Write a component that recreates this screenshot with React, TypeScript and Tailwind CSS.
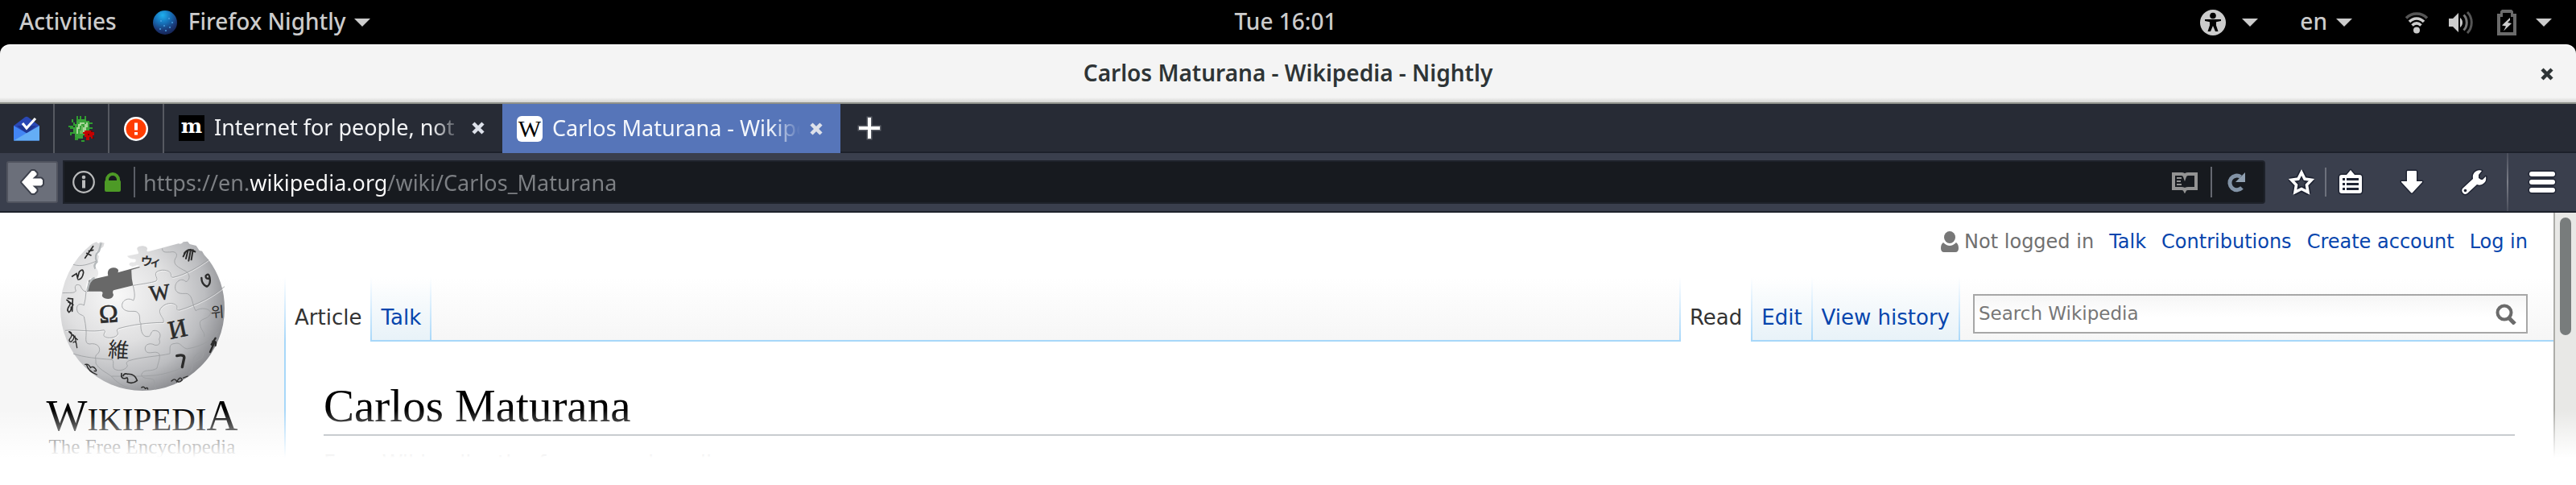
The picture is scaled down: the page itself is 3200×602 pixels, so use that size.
import React from "react";

const personalLinks = ["Talk", "Contributions", "Create account", "Log in"];

function Caret() {
  return (
    <svg width="20" height="10" viewBox="0 0 20 10" className="text-[#cccccc]">
      <path d="M0 0h20L10 10z" fill="currentColor" />
    </svg>
  );
}

function TopBar() {
  return (
    <header className="flex h-[55px] items-center bg-black px-6 text-[28px] font-medium text-[#cccccc]">
      <div className="flex flex-1 items-center">
        <button className="mr-[45px] pb-1">Activities</button>
        <button className="flex items-center">
          <svg width="30" height="30" viewBox="0 0 30 30" className="mr-[14px]">
            <defs>
              <radialGradient id="nightly" cx="0.4" cy="0.2" r="0.85">
                <stop offset="0" stopColor="#1fb0ee" />
                <stop offset="0.4" stopColor="#1670b8" />
                <stop offset="0.75" stopColor="#1b3672" />
                <stop offset="1" stopColor="#14214f" />
              </radialGradient>
            </defs>
            <circle cx="15" cy="15" r="15" fill="url(#nightly)" />
            <g fill="#4a9fe0">
              <circle cx="10" cy="13" r="1" />
              <circle cx="20" cy="10" r="1" />
              <circle cx="24" cy="15" r="1" />
              <circle cx="14" cy="19" r="1" />
              <circle cx="21" cy="21" r="1" />
              <circle cx="9" cy="23" r="1" />
              <circle cx="16" cy="25" r="1" />
            </g>
          </svg>
          <span className="mr-[10px] pb-1">Firefox Nightly</span>
          <Caret />
        </button>
      </div>
      <div className="pb-1">Tue 16:01</div>
      <div className="flex flex-1 items-center justify-end pr-[6px]">
        <button aria-label="Accessibility" className="mr-[52px] flex items-center gap-5">
          <svg width="32" height="32" viewBox="0 0 32 32">
            <circle cx="16" cy="16" r="16" fill="#cccccc" />
            <circle cx="16" cy="7.500" r="3.800" fill="#000" />
            <path d="M6 12h20v2l-6 1.200v4.300L22.500 27H19l-3-7-3 7H9.500l2.500-7.500v-4.300L6 14z" fill="#000" />
          </svg>
          <Caret />
        </button>
        <button className="mr-[66px] flex items-center gap-[11px]">
          <span className="pb-1">en</span>
          <Caret />
        </button>
        <button aria-label="System menu" className="flex items-center">
          <svg width="28" height="28" viewBox="0 0 28 28" fill="none" className="mr-[26px]">
            <path d="M1 8.500C8 1 20 1 27 8.500" stroke="#555" strokeWidth="3.500" />
            <path d="M5 13C10 7.500 18 7.500 23 13" stroke="#ccc" strokeWidth="3.500" />
            <path d="M8.500 17.500C12 14 16 14 19.500 17.500" stroke="#ccc" strokeWidth="3.500" />
            <circle cx="14" cy="23.500" r="4" fill="#ccc" />
          </svg>
          <svg width="30" height="28" viewBox="0 0 30 28" fill="none" className="mr-[30px]">
            <path d="M0 9h5l7-7v24l-7-7H0z" fill="#ccc" />
            <path d="M14 8c4 3 4 9 0 12z" fill="#ccc" />
            <path d="M18.500 4.500c5 5 5 14 0 19" stroke="#777" strokeWidth="3" />
            <path d="M23 1c7 7 7 19 0 26" stroke="#555" strokeWidth="3" />
          </svg>
          <svg width="24" height="32" viewBox="0 0 24 32" className="mr-6">
            <path d="M0 5h4V2l2-2h12l2 2v3h4v27H0zM4 9v19h16V9h-3V4H7v5z" fill="#6b6b6b" fillRule="evenodd" />
            <path d="M16 10L6 19.500l5 1L8 26.500 18 17l-5-1 3-3z" fill="#ccc" />
          </svg>
          <Caret />
        </button>
      </div>
    </header>
  );
}

function CloseIcon() {
  return (
    <svg width="16" height="16" viewBox="0 0 16 16">
      <path d="M2 2l12 12M14 2L2 14" stroke="currentColor" strokeWidth="4.500" />
    </svg>
  );
}

function TitleBar() {
  return (
    <div className="bg-black">
      <div className="flex h-[74px] items-center rounded-t-[12px] border-t-2 border-b-2 border-t-white border-b-[#8f918a] bg-[linear-gradient(#f4f4f4_64px,#d4d4d2)] px-7 text-[28px] font-semibold text-[#2e3436]">
        <div className="flex-1" />
        <h1 className="pb-1">Carlos Maturana - Wikipedia - Nightly</h1>
        <div className="flex flex-1 justify-end">
          <button aria-label="Close window">
            <CloseIcon />
          </button>
        </div>
      </div>
    </div>
  );
}

function PinnedTab({ label, children }: { label: string; children: React.ReactNode }) {
  return (
    <button
      aria-label={label}
      className="flex w-[68px] items-center justify-center border-r-2 border-[#565961]"
    >
      {children}
    </button>
  );
}

function Tab({ title, active, icon }: { title: string; active?: boolean; icon: React.ReactNode }) {
  return (
    <div
      className={
        active
          ? "flex w-[420px] items-center gap-3 bg-[#5675b9] pr-[22px] pl-[18px] text-[#f4f7fc]"
          : "flex w-[420px] items-center gap-3 border-b-2 border-[#1d212b] pr-[22px] pl-[18px] text-[#f2f3f5]"
      }
    >
      {icon}
      <span className="flex-1 overflow-hidden whitespace-nowrap [mask-image:linear-gradient(to_right,black_88%,transparent)]">
        {title}
      </span>
      <button aria-label={"Close " + title} className="text-[#dde1ea]">
        <CloseIcon />
      </button>
    </div>
  );
}

function TabStrip() {
  return (
    <div className="flex h-[61px] bg-[#272b35] text-[27px]">
      <PinnedTab label="Inbox">
        <svg width="32" height="32" viewBox="0 0 32 32">
          <path d="M0 12L14 1.500q2-1.500 4 0L32 12v10H0z" fill="#2a48b5" />
          <path d="M4 12h24L16 22z" fill="#1f3793" />
          <path d="M0 12l32 18.500H0z" fill="#4285f4" />
          <path d="M32 12v18.500H0z" fill="#64adf5" />
          <path d="M11 9l5 6 11-12" stroke="#fff" strokeWidth="3.200" fill="none" />
        </svg>
      </PinnedTab>
      <PinnedTab label="Bug tracker">
        <svg width="32" height="32" viewBox="0 0 16 16" shapeRendering="crispEdges">
          <path d="M5 0h1v3H5zM7 0h1v3H7zM10 0h1v3h-1zM2 2h1v2h1v2H3V4H2zM0 6h3v1h1v1H1V7H0zM12 4h3v1h-3zM13 7h2v1h-2zM1 10h3v1H2v1H1zM4 13h2v2H4zM8 15h2v1H8z" fill="#2f9e2f" />
          <path d="M6 2h5v1h2v6h-1v3H9v2H5v-1H4v-2H3V7h1V5h1V3h1z" fill="#3aa33a" />
          <path d="M7 4h3v1H8v1H7v2H6v3H5V7h1V5h1zM11 4h1v3h-1v2h-1v1H9V7h1V5h1z" fill="#a9d69a" />
          <path d="M8 6h1v5H7V9h1z" fill="#6fba63" />
          <path d="M10 9h4v1h2v2h-1v2h-1v-1h-1v2h-2v-2h-1v-2H9v-1h1z" fill="#c40000" />
          <path d="M14 9h1v1h-1zM15 13h1v1h-1zM12 11h1v1h-1z" fill="#6d0505" />
        </svg>
      </PinnedTab>
      <PinnedTab label="Alerts">
        <svg width="30" height="30" viewBox="0 0 30 30">
          <circle cx="15" cy="15" r="15" fill="#fff" />
          <circle cx="15" cy="15" r="12.500" fill="#ff3d00" />
          <path d="M13 7.500h4v9h-4zM13 19h4v3.500h-4z" fill="#fff" />
        </svg>
      </PinnedTab>
      <Tab
        title="Internet for people, not profit"
        icon={
          <span className="flex size-8 items-start justify-center bg-black font-['DejaVu_Serif'] text-[25px] leading-7 font-bold text-white">
            m
          </span>
        }
      />
      <Tab
        active
        title="Carlos Maturana - Wikipedia"
        icon={
          <span className="flex size-8 items-center justify-center rounded-md bg-white font-['Liberation_Serif'] text-[30px] leading-8 text-black">
            W
          </span>
        }
      />
      <div className="flex flex-1 items-center border-b-2 border-[#1d212b] pl-[21px]">
        <button aria-label="New tab">
          <svg width="30" height="30" viewBox="0 0 30 30">
            <path d="M13 2h4v11h11v4H17v11h-4V17H2v-4h11z" fill="#fff" stroke="#5b5e66" strokeWidth="3" paintOrder="stroke" />
          </svg>
        </button>
      </div>
    </div>
  );
}

function NavBar() {
  return (
    <div className="flex h-[74px] items-center border-b-2 border-[#1d212b] bg-[#3a3f4d] pl-2">
      <button
        aria-label="Back"
        className="mr-[6px] flex h-[52px] w-16 items-center justify-center rounded-[3px] border-2 border-[#51545f] bg-[#6b6f7a]"
      >
        <svg width="32" height="36" viewBox="0 0 32 36">
          <path
            d="M3 18L15.500 4h3l3 3v2l-5 4.500H27l2 2v5l-2 2H16.500l5 4.500v2l-3 3h-3z"
            fill="#fff"
            stroke="#3d414c"
            strokeWidth="4"
            strokeLinejoin="round"
            paintOrder="stroke"
          />
        </svg>
      </button>
      <div className="flex h-[54px] flex-1 items-center rounded-r-[4px] border-2 border-[#1e222a] bg-[#171a1f] pl-[10px]">
        <svg width="28" height="28" viewBox="0 0 28 28" className="mr-3">
          <circle cx="14" cy="14" r="12.800" fill="none" stroke="#b9babb" strokeWidth="2.200" />
          <path d="M12 11.500h4v10h-4z" fill="#b9babb" />
          <circle cx="14" cy="8" r="2.300" fill="#b9babb" />
        </svg>
        <svg width="20" height="24" viewBox="0 0 20 24" className="mr-4">
          <path d="M1 10V9a9 9 0 0118 0v1q1 0 1 2v10q0 2-2 2H2q-2 0-2-2V12q0-2 1-2zm4 0h10V9A5 5 0 005 9z" fill="#4d9a26" fillRule="evenodd" />
        </svg>
        <div className="mr-[10px] h-[38px] w-[2px] bg-[#5a5e66]" />
        <input
          type="text"
          aria-label="Address"
          defaultValue="https://en.wikipedia.org/wiki/Carlos_Maturana"
          className="h-[46px] min-w-0 flex-1 bg-[linear-gradient(90deg,#7d8084_132px,#fcfcfc_132px,#fcfcfc_304px,#7d8084_304px)] bg-clip-text text-[27px] text-transparent outline-none"
        />
        <button aria-label="Reader view" className="mr-4">
          <svg width="32" height="28" viewBox="0 0 32 28" fill="none">
            <path d="M2 4h10q3 0 4 3 1-3 4-3h10v18H20q-3 0-4 2-1-2-4-2H2z" stroke="#939393" strokeWidth="4" />
            <path d="M6 9h6M6 13h5M6 17h6" stroke="#939393" strokeWidth="2" />
          </svg>
        </button>
        <div className="mr-[18px] h-[38px] w-[2px] bg-[#656870]" />
        <button aria-label="Reload" className="mr-[22px]">
          <svg width="24" height="26" viewBox="0 0 24 26">
            <path d="M17.500 6.500A8.800 8.800 0 1019 20" fill="none" stroke="#8293a6" strokeWidth="5" />
            <path d="M23 1v12H11z" fill="#8f9fb0" />
          </svg>
        </button>
      </div>
      <button aria-label="Bookmark this page" className="ml-7">
        <svg width="34" height="34" viewBox="0 0 34 34">
          <g strokeLinejoin="round" fill="none">
            <path d="M17 5l4 8 8.500 1.300-6 6.200 1.500 9L17 25.500 9 29.500l1.500-9-6-6.200L13 13z" stroke="#1f2433" strokeWidth="7" />
            <path d="M17 5l4 8 8.500 1.300-6 6.200 1.500 9L17 25.500 9 29.500l1.500-9-6-6.200L13 13z" stroke="#fff" strokeWidth="3.600" strokeLinejoin="miter" />
          </g>
        </svg>
      </button>
      <div className="mx-3 h-9 w-[2px] bg-[#6d717c]" />
      <button aria-label="Bookmarks list" className="ml-[2px]">
        <svg width="32" height="34" viewBox="0 0 32 34">
          <path
            d="M5 8h6l5-6 5 6h6q3 0 3 3v17q0 3-3 3H5q-3 0-3-3V11q0-3 3-3z"
            fill="#fff"
            stroke="#1f2433"
            strokeWidth="3"
            strokeLinejoin="round"
            paintOrder="stroke"
          />
          <path d="M11 12h15v3H11zM11 18h15v3H11zM11 24h15v3H11z" fill="#1f2433" />
          <path d="M6 12h3v3H6zM6 18h3v3H6zM6 24h3v3H6z" fill="#1f2433" />
        </svg>
      </button>
      <button aria-label="Downloads" className="ml-11">
        <svg width="32" height="34" viewBox="0 0 32 34">
          <path
            d="M11 3q-1 0-1 1v12H3v1l12 13q1 1 2 0l12-13v-1h-7V4q0-1-1-1z"
            fill="#fff"
            stroke="#1f2433"
            strokeWidth="3"
            strokeLinejoin="round"
            paintOrder="stroke"
          />
        </svg>
      </button>
      <button aria-label="Developer tools" className="ml-11">
        <svg width="34" height="34" viewBox="0 0 34 34">
          <path
            d="M3 25l13-12q-1-6 3-9 4-3 8-1l-4 5v4l3 2h2l4-4q1 5-2 8-4 4-9 2L9 31q-3 2-5 0-3-3-1-6z"
            fill="#fff"
            stroke="#1f2433"
            strokeWidth="3"
            strokeLinejoin="round"
            paintOrder="stroke"
          />
          <circle cx="6.500" cy="27.500" r="1.800" fill="#1f2433" />
        </svg>
      </button>
      <div className="ml-6 h-full w-[2px] bg-[linear-gradient(#4b4f5c,#7a7d87,#4b4f5c)]" />
      <button aria-label="Menu" className="mr-6 ml-6">
        <svg width="36" height="32" viewBox="0 0 36 32">
          <g fill="#fff" stroke="#1f2433" strokeWidth="3" paintOrder="stroke">
            <rect x="2" y="3" width="32" height="6" rx="3" />
            <rect x="2" y="13" width="32" height="6" rx="3" />
            <rect x="2" y="23" width="32" height="6" rx="3" />
          </g>
        </svg>
      </button>
    </div>
  );
}

function Globe() {
  return (
    <svg width="206" height="190" viewBox="69 36 618 570" className="shrink-0">
      <defs>
        <radialGradient id="sphere" cx="0.34" cy="0.36" r="0.72">
          <stop offset="0" stopColor="#f8f8f8" />
          <stop offset="0.45" stopColor="#dfdfe0" />
          <stop offset="0.75" stopColor="#bcbdc0" />
          <stop offset="1" stopColor="#85868a" />
        </radialGradient>
      </defs>
      <path d="M170 236L178 188 250 172C244 150 258 140 272 142C290 144 290 154 286 160L368 137 372 215 270 262H225z" fill="#686868" />
      <path
        d="M72 294A306 306 0 01190 53L206 46 214 52 222 46 236 50 232 64 221 72 218 82 204 82Q208 96 216 98L212 118 203 126 202 142C218 150 216 178 202 180Q186 176 178 186Q164 206 168 230H222C236 232 226 240 228 248C236 260 262 262 268 248C274 240 262 236 270 226L343 208Q336 180 337 150L369 140Q362 128 350 136 334 142 328 130 330 120 344 122 356 122 352 110 328 110 321 98L362 90C366 82 356 78 358 68C368 56 394 60 396 70C396 78 390 82 400 82L512 52Q524 56 530 46L546 44 554 54 578 60 590 78 600 80 608 94 624 112A306 306 0 01684 294A306 306 0 0172 294z"
        fill="url(#sphere)"
      />
      <path d="M224 50L216 80Q196 96 208 120 194 132 202 146M200 180Q180 184 172 228" fill="none" stroke="#b5b9bb" strokeWidth="7" />
      <g fill="none" stroke="#fff" strokeWidth="3" strokeOpacity="0.6" transform="translate(2 3)">
        <path d="M343 208C380 202 410 198 428 192C440 182 420 172 430 158C446 146 476 150 482 162C488 172 480 176 492 178C540 168 590 136 624 112" />
        <path d="M90 376C130 370 190 384 234 374C246 380 228 388 236 398C250 408 280 402 286 390C288 380 276 374 290 368C340 354 400 346 456 346C462 330 436 318 444 296C460 272 492 268 506 284C510 296 500 300 516 300C580 280 640 250 684 212" />
      </g>
      <g fill="none" stroke="#9b9da0" strokeWidth="2.500">
        <path d="M343 208C380 202 410 198 428 192C440 182 420 172 430 158C446 146 476 150 482 162C488 172 480 176 492 178C540 168 590 136 624 112" />
        <path d="M452 70C450 90 476 82 480 84C504 78 512 94 500 108C490 130 510 140 540 155C560 170 552 190 540 194C520 174 492 200 502 226C514 246 540 234 548 240C566 250 562 276 576 302C600 286 640 296 630 316C620 336 590 330 592 350C596 380 612 380 608 400" />
        <path d="M90 376C130 370 190 384 234 374C246 380 228 388 236 398C250 408 280 402 286 390C288 380 276 374 290 368C340 354 400 346 456 346C462 330 436 318 444 296C460 272 492 268 506 284C510 296 500 300 516 300C580 280 640 250 684 212" />
        <path d="M343 208C348 232 352 250 344 264C320 248 294 270 304 292C320 312 344 300 356 306C376 318 362 340 372 350C370 380 380 402 400 398C410 398 408 378 420 376C440 374 450 390 440 408C446 424 440 432 424 430C404 418 380 430 390 452C402 468 426 448 440 462C446 476 436 496 432 516C410 532 382 516 374 540C376 560 412 550 420 560L428 596" />
        <path d="M168 230Q166 260 160 282C144 272 130 280 134 300C138 318 154 316 160 324Q166 350 168 376C170 400 160 424 180 426C210 420 226 440 214 460C196 470 206 480 204 498C216 520 240 530 262 546Q290 580 330 590" />
        <path d="M120 462C160 476 210 480 264 484C276 490 262 510 274 520C294 530 320 520 322 506C316 498 318 492 328 488C370 474 440 472 480 462C482 440 474 426 500 424C520 418 524 440 544 444C590 436 630 420 660 380" />
        <path d="M80 236C110 234 124 238 130 228C122 210 130 200 146 208Q156 232 168 230M120 130C150 140 180 128 204 118" />
        <path d="M262 546C310 546 380 548 430 542C500 532 560 500 600 478C620 440 570 460 568 484C560 510 570 520 550 534" />
      </g>
      <g fill="#2b2b2b" className="font-['Liberation_Serif','Noto_Sans_CJK_JP',serif]">
        <text x="216" y="346" fontSize="96" stroke="#2b2b2b" strokeWidth="2" transform="rotate(-4 250 320)">Ω</text>
        <text x="402" y="262" fontSize="82" stroke="#2b2b2b" strokeWidth="2" transform="rotate(-7 440 230)">W</text>
        <text x="474" y="402" fontSize="96" stroke="#2b2b2b" strokeWidth="2" transform="rotate(-12 508 370)">И</text>
        <text x="250" y="476" fontSize="78" transform="rotate(4 290 450)">維</text>
        <text x="372" y="134" fontSize="44" stroke="#2b2b2b" strokeWidth="2" transform="rotate(4 400 115)">ウ</text>
        <text x="406" y="134" fontSize="42" stroke="#2b2b2b" strokeWidth="2" transform="rotate(4 400 115)">ィ</text>
        <text x="632" y="326" fontSize="54" transform="rotate(-4 655 300)">위</text>
      </g>
      <g fill="none" stroke="#2b2b2b" strokeWidth="5" strokeLinecap="round">
        <path d="M506 470Q540 462 532 484L526 512" strokeWidth="10" />
        <path d="M598 180Q598 204 618 212 634 204 628 176 624 160 614 172 612 184 626 182" strokeWidth="7" />
        <path d="M538 84L530 100M548 76L540 108M558 74L550 116M566 76L560 112M534 88Q550 66 574 82" strokeWidth="6" />
        <path d="M194 62L164 106M170 88L186 96M178 80L194 76" />
        <path d="M116 174L132 164 136 180 142 158Q156 142 158 160 154 184 140 186" />
        <path d="M100 256L118 258 116 304M102 270Q114 274 104 286 94 300 104 308 114 300 112 288M96 262L120 280" />
        <path d="M106 380Q118 384 112 400 98 416 112 418 128 404 120 392M126 396L134 440M104 380L136 410M120 420Q130 412 132 428" strokeWidth="4" />
        <path d="M164 502Q178 498 184 514 194 506 204 520 210 530 198 526M170 504Q176 528 208 540" strokeWidth="4" />
        <path d="M300 536Q296 556 314 554 326 546 322 568 342 576 358 562 350 536 322 538 310 534 306 544" />
        <path d="M486 564Q500 550 506 566 520 542 526 560 516 570 510 566M530 552L546 546" strokeWidth="4" />
        <path d="M650 404L634 430 646 420 630 456M640 416Q656 414 650 432" strokeWidth="7" />
        <path d="M374 588Q384 582 388 592 398 586 398 594" strokeWidth="4" />
      </g>
    </svg>
  );
}

function ViewTab({ label, active }: { label: string; active?: boolean }) {
  return (
    <>
      <a
        href="#"
        className={
          active
            ? "bg-white px-[11px] pt-[34px] leading-8 text-[#333333]"
            : "border-b-2 border-[#a7d7f9] bg-linear-to-b from-white to-[#e8f2f8] px-[11px] pt-[34px] leading-8 text-[#0645ad]"
        }
      >
        {label}
      </a>
      <div className="w-[2px] bg-linear-to-b from-white to-[#a7d7f9]" />
    </>
  );
}

function WikiPage() {
  return (
    <main className="relative flex h-[304px] overflow-hidden bg-[#f6f6f6] font-['DejaVu_Sans']">
      <div className="flex flex-1 bg-[linear-gradient(#ffffff_80px,#f6f6f6_160px)]">
        <aside className="flex w-[353px] flex-col items-center pt-[33px] font-['Liberation_Serif'] text-black">
          <Globe />
          <div className="mt-1 flex items-baseline text-[54px] leading-[50px]">
            W<span className="text-[41px]">IKIPEDI</span>A
          </div>
          <div className="text-[25px] leading-5 text-[#222222]">The Free Encyclopedia</div>
        </aside>
        <div className="flex flex-1 flex-col">
          <nav className="flex h-20 shrink-0 items-start justify-end gap-[19px] pt-5 pr-8 text-[24px] leading-8 text-[#0645ad]">
            <div className="flex items-center gap-[7px] text-[#707070]">
              <svg width="22" height="26" viewBox="0 0 22 26" fill="#777777">
                <ellipse cx="11" cy="7.500" rx="7" ry="7.500" />
                <path d="M3 14q8 8 16 0 3 2 3 7 0 5-4 5H4q-4 0-4-5 0-5 3-7z" />
              </svg>
              Not logged in
            </div>
            {personalLinks.map((link) => (
              <a key={link} href="#">
                {link}
              </a>
            ))}
          </nav>
          <div className="flex h-20 shrink-0 text-[26px]">
            <div className="w-[2px] bg-linear-to-b from-white to-[#a7d7f9]" />
            <ViewTab label="Article" active />
            <ViewTab label="Talk" />
            <div className="flex-1 border-b-2 border-[#a7d7f9]" />
            <div className="w-[2px] bg-linear-to-b from-white to-[#a7d7f9]" />
            <ViewTab label="Read" active />
            <ViewTab label="Edit" />
            <ViewTab label="View history" />
            <form className="flex items-end border-b-2 border-[#a7d7f9] pr-8 pb-2 pl-4">
              <div className="flex h-[49px] w-[689px] items-center border-2 border-[#a7a7a7] bg-linear-to-b from-[#f6f6f6] to-white to-60% pr-3 pl-[5px]">
                <input
                  type="search"
                  aria-label="Search Wikipedia"
                  placeholder="Search Wikipedia"
                  className="min-w-0 flex-1 bg-transparent text-[23px] outline-none placeholder:text-[#777777]"
                />
                <button aria-label="Search">
                  <svg width="26" height="26" viewBox="0 0 26 26" fill="none" stroke="#6b6b6b">
                    <circle cx="11" cy="11" r="8.500" strokeWidth="4" />
                    <path d="M16 17l8 8" strokeWidth="5" />
                  </svg>
                </button>
              </div>
            </form>
          </div>
          <article className="flex-1 border-l-2 border-[#a7d7f9] bg-white pt-11 pr-12 pl-[47px]">
            <h2 className="border-b-2 border-[#8b929a] font-['Liberation_Serif'] text-[57px] leading-[71px] text-black">
              Carlos Maturana
            </h2>
            <p className="mt-4 text-[26px] leading-9 text-[#222222]">From Wikipedia, the free encyclopedia</p>
          </article>
        </div>
      </div>
      <div className="w-7 border-l-2 border-[#adada9] bg-[#e8e8e6] pt-[6px] pl-[6px]">
        <div className="h-[146px] w-[14px] rounded-full bg-[#787c7c]" />
      </div>
      <div className="absolute inset-x-0 bottom-0 h-[60px] bg-linear-to-b from-white/0 to-white" />
    </main>
  );
}

export default function App() {
  return (
    <div className="min-h-screen bg-white font-['Noto_Sans',sans-serif]">
      <TopBar />
      <TitleBar />
      <TabStrip />
      <NavBar />
      <WikiPage />
    </div>
  );
}
